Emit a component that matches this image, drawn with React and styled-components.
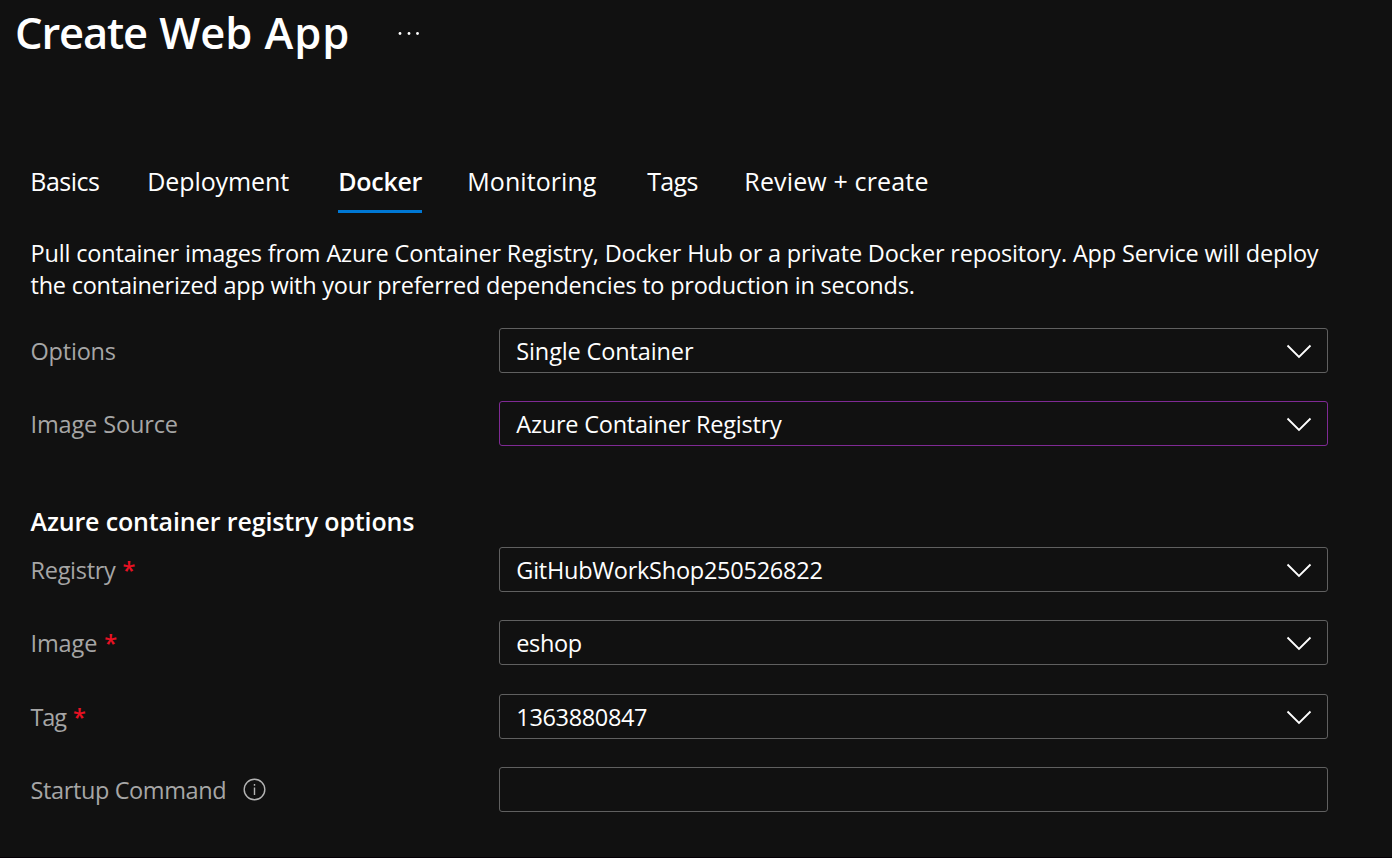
import React from "react";
import styled, { createGlobalStyle } from "styled-components";

const GlobalStyle = createGlobalStyle`
  *, *::before, *::after { box-sizing: border-box; }
  body { margin: 0; background: #111111; }
`;

const Page = styled.main`
  width: 1392px;
  height: 858px;
  overflow: hidden;
  background: #111111;
  border-bottom: 1px solid #050005;
  color: #ffffff;
  font-family: "Open Sans", "Noto Sans", sans-serif;
  font-size: 23.5px;
  line-height: 32px;
`;

const Header = styled.header`
  display: flex;
  align-items: center;
  gap: 47px;
  height: 66px;
  padding-left: 15px;
`;

const Title = styled.h1`
  margin: 0;
  font-size: 43.5px;
  font-weight: 600;
  line-height: 66px;
  word-spacing: 1px;
  white-space: nowrap;
`;

const Word = styled.span`
  letter-spacing: ${(p) => p.$track}px;
`;

const MoreButton = styled.button`
  display: flex;
  padding: 0;
  border: 0;
  background: none;
  color: #ffffff;
`;

const Tabs = styled.nav`
  display: flex;
  gap: 45px;
  margin-top: 95px;
  padding-left: 30px;
`;

const Tab = styled.button`
  width: ${(p) => p.$width}px;
  height: 52px;
  padding: 0 0 9px 0.3px;
  border: 0;
  border-bottom: 3px solid ${(p) => (p.$active ? "#0078d4" : "transparent")};
  background: none;
  color: #ffffff;
  font-family: inherit;
  font-size: 25px;
  font-weight: ${(p) => (p.$active ? 600 : 400)};
  line-height: 40px;
  letter-spacing: ${(p) => p.$track}px;
  text-align: left;
  white-space: nowrap;
`;

const Intro = styled.p`
  margin: 24px 0 0 30.5px;
  white-space: nowrap;
`;

const Line = styled.span`
  display: block;
  letter-spacing: ${(p) => p.$track}px;
`;

const Fields = styled.section`
  display: grid;
  grid-auto-rows: 45px;
  row-gap: ${(p) => p.$gap}px;
  margin-top: ${(p) => p.$top}px;
  padding-left: 30px;
`;

const Field = styled.div`
  display: grid;
  grid-template-columns: 469px 829px;
  align-items: center;
`;

const Label = styled.label`
  display: flex;
  align-items: center;
  padding: 1px 0 0 0.5px;
  color: #a6a6a6;
  letter-spacing: ${(p) => p.$track}px;
`;

const Required = styled.span`
  margin-left: 7px;
  color: #e81123;
  font-weight: 600;
  letter-spacing: 0;
`;

const Select = styled.div`
  display: flex;
  align-items: center;
  justify-content: space-between;
  height: 45px;
  padding: 1px 15px 0 16.3px;
  border: 1px solid ${(p) => (p.$edited ? "#7f2a94" : "#606060")};
  border-radius: 3px;
  letter-spacing: ${(p) => p.$track}px;
`;

const TextInput = styled.input`
  height: 45px;
  padding: 0 16px;
  border: 1px solid #606060;
  border-radius: 3px;
  outline: 0;
  background: transparent;
  color: #ffffff;
  font: inherit;
`;

const SectionTitle = styled.h2`
  margin: 58px 0 0 30.5px;
  font-size: 25px;
  font-weight: 600;
  line-height: 34px;
  letter-spacing: -0.14px;
`;

const InfoSvg = styled.svg`
  margin-left: 17px;
`;

const Chevron = () => (
  <svg width="26" height="16" viewBox="0 0 26 16" fill="none" stroke="#ffffff" strokeWidth="1.8">
    <path d="M1.5 2.5 L13 14 L24.5 2.5" />
  </svg>
);

const Info = () => (
  <InfoSvg width="23" height="23" viewBox="0 0 23 23" fill="none" stroke="#b4b4b4" strokeWidth="1.4">
    <circle cx="11.5" cy="11.5" r="10.3" />
    <path d="M11.5 9.5V17M11.5 6V7.8" />
  </InfoSvg>
);

const Dots = () => (
  <svg width="24" height="6" viewBox="0 0 24 6" fill="currentColor">
    <circle cx="3" cy="3.5" r="1.4" />
    <circle cx="12" cy="3.5" r="1.4" />
    <circle cx="20.5" cy="3.5" r="1.4" />
  </svg>
);

const tabs = [
  { name: "Basics", width: 72, track: -0.5 },
  { name: "Deployment", width: 146, track: -0.1 },
  { name: "Docker", width: 84, track: -0.3 },
  { name: "Monitoring", width: 135, track: 0.06 },
  { name: "Tags", width: 52, track: -0.7 },
  { name: "Review + create", width: 190, track: 0.15 },
];

function SelectField({ label, labelTrack, value, valueTrack, required, edited }) {
  return (
    <Field>
      <Label $track={labelTrack}>
        {label}
        {required && <Required>*</Required>}
      </Label>
      <Select $track={valueTrack} $edited={edited}>
        {value}
        <Chevron />
      </Select>
    </Field>
  );
}

export default function App() {
  return (
    <Page>
      <GlobalStyle />
      <Header>
        <Title>
          <Word $track={-1.15}>Create</Word> <Word $track={-0.1}>Web</Word> <Word $track={0.9}>App</Word>
        </Title>
        <MoreButton aria-label="More"><Dots /></MoreButton>
      </Header>
      <Tabs>
        {tabs.map((t) => (
          <Tab key={t.name} $width={t.width} $track={t.track} $active={t.name === "Docker"}>
            {t.name}
          </Tab>
        ))}
      </Tabs>
      <Intro>
        <Line $track={-0.172}>
          Pull container images from Azure Container Registry, Docker Hub or a private Docker repository. App Service will deploy
        </Line>
        <Line $track={-0.232}>
          the containerized app with your preferred dependencies to production in seconds.
        </Line>
      </Intro>
      <Fields $top={27} $gap={28}>
        <SelectField label="Options" labelTrack={-0.2} value="Single Container" valueTrack={-0.13} />
        <SelectField label="Image Source" labelTrack={-0.13} value="Azure Container Registry" valueTrack={-0.22} edited />
      </Fields>
      <SectionTitle>Azure container registry options</SectionTitle>
      <Fields $top={9} $gap={28.33}>
        <SelectField label="Registry" labelTrack={-0.28} value="GitHubWorkShop250526822" valueTrack={-0.25} required />
        <SelectField label="Image" labelTrack={-0.1} value="eshop" valueTrack={-0.4} required />
        <SelectField label="Tag" labelTrack={-1.1} value="1363880847" valueTrack={-0.35} required />
        <Field>
          <Label $track={-0.38}>
            Startup Command
            <Info />
          </Label>
          <TextInput aria-label="Startup Command" />
        </Field>
      </Fields>
    </Page>
  );
}
